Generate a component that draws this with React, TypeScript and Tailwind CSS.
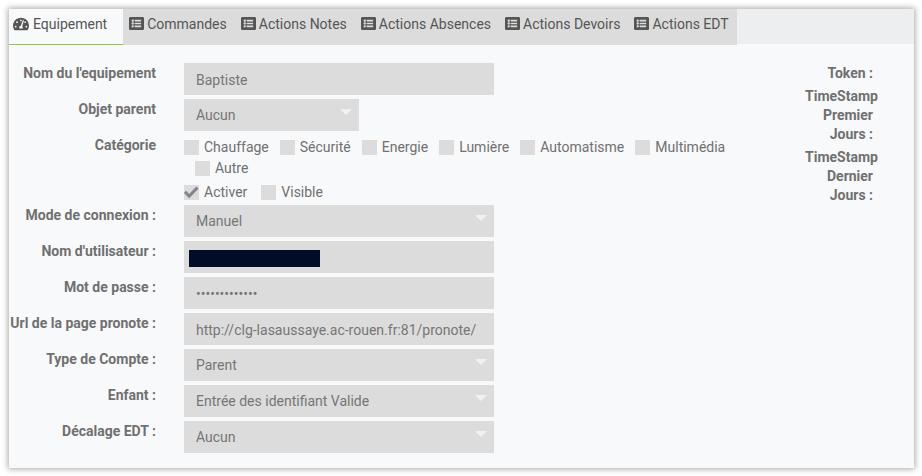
import { FaListAlt, FaTachometerAlt } from 'react-icons/fa'

const tabs = [
  'Commandes',
  'Actions Notes',
  'Actions Absences',
  'Actions Devoirs',
  'Actions EDT',
]

const categories = [
  'Chauffage',
  'Sécurité',
  'Energie',
  'Lumière',
  'Automatisme',
  'Multimédia',
  'Autre',
]

const fieldClass =
  'block h-8 w-full appearance-none rounded-none border-0 bg-[#dcdcdc] px-3 text-sm text-[#767676] outline-none'

const Row = ({ id, label, children }: any) => {
  const labelClass =
    'w-[147px] shrink-0 whitespace-nowrap pt-px text-right font-bold leading-[19px]'

  return (
    <div className="flex">
      {id ? (
        <label htmlFor={id} className={labelClass}>
          {label}
        </label>
      ) : (
        <span className={labelClass}>{label}</span>
      )}
      <div className="ml-7 min-w-0 flex-1">{children}</div>
    </div>
  )
}

const Select = ({ id, value, small }: any) => (
  <div className={`relative ${small ? 'max-w-[175px]' : 'max-w-[310px]'}`}>
    <select id={id} className={`${fieldClass} pb-px`}>
      <option>{value}</option>
    </select>
    <svg
      className="pointer-events-none absolute right-[7px] top-2.5"
      width="12"
      height="6"
      viewBox="0 0 12 6"
    >
      <path d="M0 0h12L6 6z" fill="#f1f1f1" />
    </svg>
  </div>
)

const Check = ({ label, checked, className = '' }: any) => (
  <label className={`flex items-center gap-[5px] ${className}`}>
    <span className="relative block size-[15px]">
      <input
        type="checkbox"
        defaultChecked={checked}
        className="peer block size-[15px] appearance-none bg-[#dcdcdc]"
      />
      <svg
        className="pointer-events-none absolute inset-0 hidden peer-checked:block"
        width="15"
        height="15"
        viewBox="0 0 15 15"
      >
        <path
          d="M1 6.8l4.2 4.2L13.4 2.6"
          fill="none"
          stroke="#85858d"
          strokeWidth="3"
        />
      </svg>
    </span>
    {label}
  </label>
)

const App = () => {
  return (
    <div className="bg-white pt-[9px] pr-2 pb-2 pl-[9px] font-['Roboto',sans-serif] text-sm text-[#707070]">
      <div className="bg-[#f8f9fb] pb-[15px] shadow-[0_0_6px_1px_rgba(0,0,0,0.35)]">
        <nav className="flex h-[35px] bg-[#edeef0] text-[#555]">
          <a
            href="#equipement"
            className="flex h-9 items-start gap-1 border-b border-[#93c834] bg-[#f8f9fb] pt-[5px] pr-4 pl-1"
          >
            <FaTachometerAlt className="mt-[2px] size-4" />
            Equipement
          </a>
          {tabs.map((tab) => (
            <a
              key={tab}
              href="#"
              className="flex h-9 items-start gap-[3px] whitespace-nowrap bg-[#dcdcdc] pt-[5px] pr-2 pl-1.5"
            >
              <FaListAlt className="mt-[2px] size-[15px]" />
              {tab}
            </a>
          ))}
        </nav>
        <form className="flex justify-between pt-[19px]">
          <div className="flex w-[85%] flex-col gap-1">
            <Row id="name" label="Nom du l'equipement">
              <input
                id="name"
                defaultValue="Baptiste"
                className={`${fieldClass} max-w-[310px] pt-px`}
              />
            </Row>
            <Row id="parent" label="Objet parent">
              <Select id="parent" value="Aucun" small />
            </Row>
            <Row label="Catégorie">
              <div className="flex flex-wrap pt-0.5 leading-[21px]">
                {categories.map((category) => (
                  <Check
                    key={category}
                    label={category}
                    className="ml-[11px] first:ml-0"
                  />
                ))}
              </div>
              <div className="mt-[5px] flex gap-3.5 leading-[17px]">
                <Check label="Activer" checked />
                <Check label="Visible" />
              </div>
            </Row>
            <Row id="mode" label="Mode de connexion :">
              <Select id="mode" value="Manuel" />
            </Row>
            <Row id="user" label="Nom d'utilisateur :">
              <div className="relative max-w-[310px]">
                <input id="user" className={fieldClass} />
                <span className="absolute top-[9px] left-[5px] h-[17px] w-[131px] bg-[#000c28]" />
              </div>
            </Row>
            <Row id="password" label="Mot de passe :">
              <input
                id="password"
                type="password"
                defaultValue="motdepasse123"
                className={`${fieldClass} max-w-[310px] pt-px`}
              />
            </Row>
            <Row id="url" label="Url de la page pronote :">
              <input
                id="url"
                defaultValue="http://clg-lasaussaye.ac-rouen.fr:81/pronote/"
                className={`${fieldClass} max-w-[310px] pt-px`}
              />
            </Row>
            <Row id="account" label="Type de Compte :">
              <Select id="account" value="Parent" />
            </Row>
            <Row id="child" label="Enfant :">
              <Select id="child" value="Entrée des identifiant Valide" />
            </Row>
            <Row id="offset" label="Décalage EDT :">
              <Select id="offset" value="Aucun" />
            </Row>
          </div>
          <div className="mr-[41px] flex w-[68px] flex-col gap-1 pt-px text-right font-bold leading-[19px]">
            <p>Token :</p>
            <p>TimeStamp Premier Jours :</p>
            <p>TimeStamp Dernier Jours :</p>
          </div>
        </form>
      </div>
    </div>
  )
}

export default App
